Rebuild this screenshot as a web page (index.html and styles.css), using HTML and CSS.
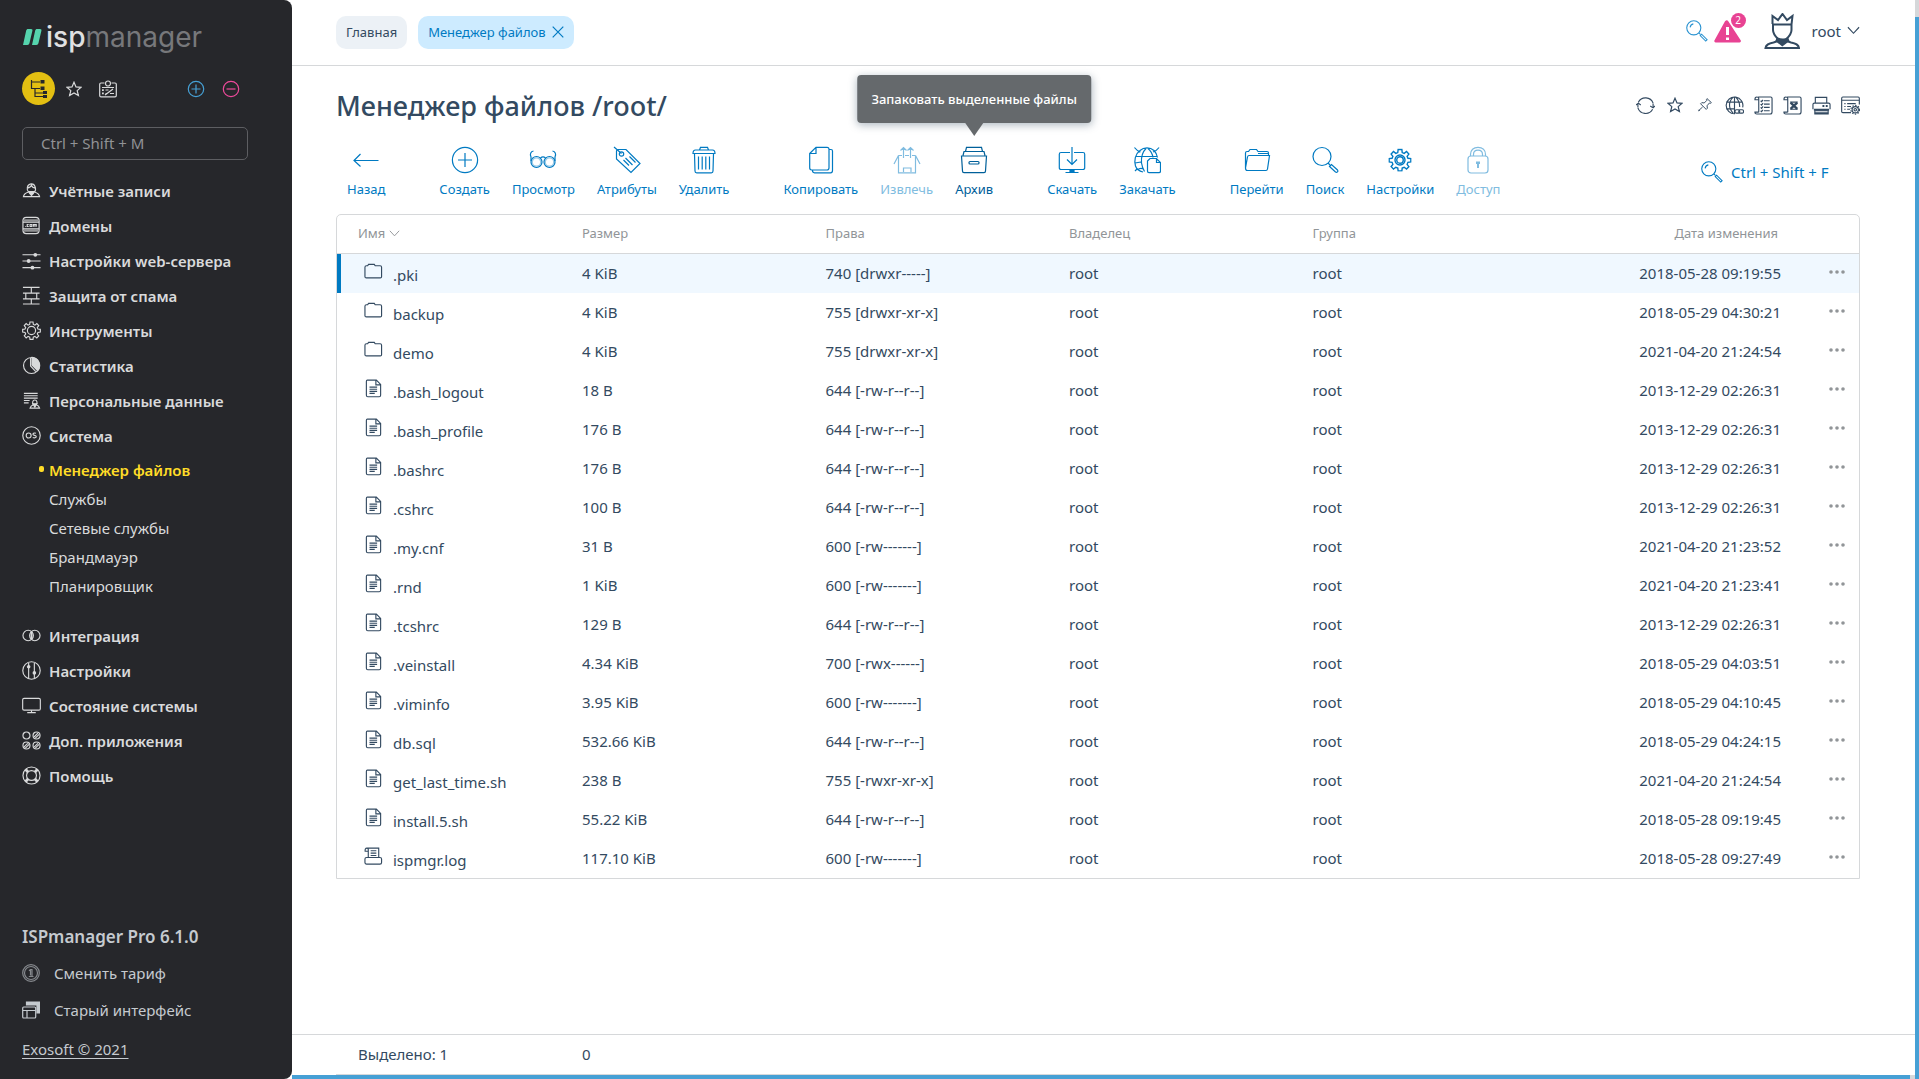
FILE: index.html
```html
<!DOCTYPE html>
<html lang="ru">
<head>
<meta charset="utf-8">
<title>Менеджер файлов</title>
<link rel="stylesheet" href="styles.css">
</head>
<body>
<svg class="sprite" aria-hidden="true">
  <symbol id="i-tree" viewBox="0 0 18 20"><path d="M1.500 1V9.500H10M1.500 3H10M5 10V17.500H13M5 14H13"/><path d="M10.500 1h4v3.500h-4zM10.500 7.500h4v3.500h-4zM13 12h4v3h-4zM13 16h4v3h-4z" fill="currentColor" stroke="none"/></symbol>
  <symbol id="i-star" viewBox="0 0 16 16"><path d="M8 1.200l2 4.700 5 .4-3.800 3.300 1.200 5L8 11.900l-4.400 2.700 1.200-5L1 6.300l5-.4z"/></symbol>
  <symbol id="i-card" viewBox="0 0 18 18"><path d="M5.500 3H2a1.300 1.300 0 0 0-1.300 1.300v11.200A1.300 1.300 0 0 0 2 16.800h14a1.300 1.300 0 0 0 1.300-1.300V4.300A1.300 1.300 0 0 0 16 3h-3.500"/><circle cx="9" cy="3.500" r="2.500"/><path d="M3 7.500h12M6.500 10h3M6.500 13.500h2M11 13.500h4M6 15l8-6"/><path d="M3 9.200h1.800v1.700H3zM3 12.600h1.800v1.700H3z" fill="currentColor" stroke="none"/></symbol>
  <symbol id="i-plus" viewBox="0 0 18 18"><circle cx="9" cy="9" r="7.700"/><path d="M4.500 9h9M9 4.500v9"/></symbol>
  <symbol id="i-minus" viewBox="0 0 18 18"><circle cx="9" cy="9" r="7.700"/><path d="M4.500 9h9"/></symbol>

  <symbol id="i-user" viewBox="0 0 20 20"><path d="M7 11.500C4.500 9.500 5 3.500 9.500 3s6 6 3.500 8.500c2.500.8 5 1.500 5.500 5h-17c.500-3.500 3-4.200 5.500-5zM5.500 7.500C8 7 9.500 6 10 4.500c.5 1.700 2 2.700 4 3"/><path d="M6 10.500h8l-1.500 3L10 16l-2.500-2.500z" fill="currentColor" stroke="none"/></symbol>
  <symbol id="i-domain" viewBox="0 0 20 20"><rect x="1" y="1.500" width="17" height="17" rx="3.500"/><path d="M2 4.500h15M2 15.500h15" opacity=".6" stroke-width="2"/><path d="M1 6.500h17M1 13.500h17"/><path d="M3.500 11h.8M7 9H5.500v2H7M8.500 9h1.800v2H8.500zM12 11.200V9h1.500v2.200M13.500 9H15v2.200"/></symbol>
  <symbol id="i-sliders" viewBox="0 0 20 20"><path d="M.5 4H19.500M.5 10.500h19M.5 17.500h19"/><g fill="currentColor" stroke="none"><circle cx="14" cy="4" r="2"/><circle cx="7" cy="10.500" r="2"/><circle cx="11" cy="17.500" r="2"/></g></symbol>
  <symbol id="i-wall" viewBox="0 0 20 20"><path d="M1 1.500h17.500M1 7.500h17.500M1 13.500h17.500M1 19h17.500M9.800 1.500v6M4 7.500v6M15.500 7.500v6M9.800 13.500V19"/></symbol>
  <symbol id="i-gear" viewBox="0 0 20 20"><path d="M8.400 1h3.200l.3 2.600 1.700.7 2-1.600 2 2.200-1.500 2 .7 1.600 2.500.3v2.800l-2.500.4-.7 1.700 1.500 2-2 2.100-2-1.600-1.700.7-.3 2.400H8.400l-.3-2.400-1.700-.7-2 1.600-2-2.200 1.500-1.900-.7-1.700-2.500-.4V8.800l2.500-.3.7-1.600-1.500-2 2-2.200 2 1.600 1.700-.7z"/><circle cx="10" cy="10" r="4.300"/></symbol>
  <symbol id="i-pie" viewBox="0 0 20 20"><circle cx="10" cy="10" r="8.400"/><path d="M9 2v8.500l5.500 6"/><path d="M10.500 1.500A8.500 8.500 0 0 1 16.500 15.500L10.500 9.500z" fill="currentColor"/></symbol>
  <symbol id="i-personal" viewBox="0 0 20 20"><path d="M2 2.500h14.500M2 5h14.500M2 7.500h14.500M2 10h6M2 12.500h5M8.500 18c.5-2.500 2-3 3.500-3.500-1.500-1.500-1-5 1.500-5s3 3.500 1.500 5c1.500.5 3 1 3.500 3.500z"/><path d="M11.500 13.500h4L13.500 17z" fill="currentColor"/></symbol>
  <symbol id="i-os" viewBox="0 0 20 20"><circle cx="10" cy="10" r="9.200"/><circle cx="7" cy="10" r="2.600"/><path d="M14.700 7.700c-1.500-.7-3.200-.3-3.200 1s3.500 1 3.500 2.400-2 1.700-3.700.9"/></symbol>
  <symbol id="i-rings" viewBox="0 0 20 20"><circle cx="6.500" cy="10" r="5.500"/><circle cx="13.500" cy="10" r="5.500"/><path d="M10 6v8" stroke-width="2"/></symbol>
  <symbol id="i-tune" viewBox="0 0 20 20"><circle cx="10" cy="10" r="9.200"/><path d="M7 2v16M13 2v16"/><g fill="currentColor" stroke="none"><circle cx="7" cy="6" r="1.900"/><circle cx="13" cy="12.500" r="1.900"/></g></symbol>
  <symbol id="i-screen" viewBox="0 0 20 20"><rect x=".7" y="2.500" width="18.600" height="12.300" rx="1.500"/><path d="M10 15v2.500M5.500 17.500h9" /></symbol>
  <symbol id="i-apps" viewBox="0 0 20 20"><circle cx="4.700" cy="4.700" r="3.700"/><circle cx="15.300" cy="4.700" r="3.700"/><circle cx="4.700" cy="15.300" r="3.700"/><circle cx="15.300" cy="15.300" r="3.700"/><path d="M12.700 6.300l4-4M14 7.500l4-4M2 17l4-4M3.500 18l4-4M12.700 17l4-4M14 18l4-4"/></symbol>
  <symbol id="i-help" viewBox="0 0 20 20"><circle cx="10" cy="10" r="9"/><circle cx="10" cy="10" r="5.200"/><path d="M3.800 3.800l2.500 2.500M16.200 3.800l-2.500 2.500M3.800 16.200l2.500-2.500M16.200 16.200l-2.500-2.500" stroke-width="3"/></symbol>
  <symbol id="i-coin" viewBox="0 0 18 18"><circle cx="9" cy="9" r="8.300"/><circle cx="9" cy="9" r="6.500"/><path d="M7 6.800l1.500-1.300H10v7M6.800 12.500h4.700M8.500 5.500v6"/></symbol>
  <symbol id="i-windows" viewBox="0 0 18 18"><path d="M4.500 1h13v11h-2.500V4H4.500z" fill="currentColor"/><rect x=".7" y="6" width="13" height="11" rx="1"/><path d="M1 9.500h12.500M5 9.500V17"/></symbol>

  <symbol id="i-search" viewBox="0 0 24 24"><circle cx="8.500" cy="8.500" r="7.700"/><path d="M14 14l1.700 1.700M15.500 17l1.500-1.500 6 6-1.500 1.500zM4.500 8A4.500 4.500 0 0 1 8 4.200"/></symbol>
  <symbol id="i-alert" viewBox="0 0 28 24"><path d="M12 1.500a2 2 0 0 1 2.300.8L26.500 21a1.500 1.500 0 0 1-1.300 2.500H2A1.500 1.500 0 0 1 .7 21L11 2.300z" fill="currentColor" stroke="none"/><path d="M13.500 8v8M13.500 18.500v2.500" stroke="#fff" stroke-width="3"/></symbol>
  <symbol id="i-avatar" viewBox="0 0 36 36"><path d="M8.500 11V3l5.500 4 4.500-6 4.500 6 5.500-4-1 8.500V17c0 4-3 7-5 9v2l4.500 1.500c5 1 7.500 2 8 5.500H1.500c.5-3.500 3-4.500 8-5.500L14 28v-2c-2-2-5-5-5-9v-6M9 11.500h18.500" stroke-width="2"/><path d="M13 24c3.500 2 7.500 2 11 0l1.500 4-7.200 5.500-7-5.500z" fill="currentColor" stroke="none"/></symbol>
  <symbol id="i-chevron" viewBox="0 0 14 9"><path d="M1 1l6 6.500L13 1"/></symbol>
  <symbol id="i-close" viewBox="0 0 12 12"><path d="M.7.700l10.600 10.600M11.300.700L.7 11.300"/></symbol>

  <symbol id="i-refresh" viewBox="0 0 20 20"><path d="M2 12.500a8.500 8.500 0 0 0 15.500 1.500M18 7.500A8.500 8.500 0 0 0 2.500 6.500M0 9.500l2.500-2 2.500 2M2 12V8M15 10.500l3 2 2-2M18 8v4"/></symbol>
  <symbol id="i-pin" viewBox="0 0 20 20"><path d="M12.500 2l5.500 5-1.500 1-1-.5-3 3.500.5 3-1.500 1.500-7-7L6 7l3 .5L12.500 4l-.7-1zM7 12.500L1.500 17.500M2 16l1.500 1.500"/></symbol>
  <symbol id="i-globe" viewBox="0 0 20 20"><path d="M10.500 18.700A8.800 8.800 0 1 1 18.600 12M10 1v17.500M1.200 6.500h17.500M1.200 13.500h9M8.500 1.500C3.500 6 3.500 13 8.500 18M11.500 1.500c3 3 4 6 4 10"/><rect x="10.500" y="14.500" width="5" height="3.500" rx="1.500"/><rect x="14.500" y="14.500" width="5" height="3.500" rx="1.500"/></symbol>
  <symbol id="i-list" viewBox="0 0 20 20"><path d="M4.500 1H17.500c1 0 1.500.5 1.500 1.500v14c0 2-1 2.500-2 2.500H3c-1.500 0-2-1-2-2h4M5 17V3c0-1.300-.5-2-2-2S1 2 1 4h4M10.500 5h6M10.500 8.500h6M10.500 12h6M10.500 15.500h6M7 5l1 1 1.500-2M7 8.500l1 1 1.500-2M7 12l1 1 1.500-2M7 15.500l1 1 1.500-2"/></symbol>
  <symbol id="i-excel" viewBox="0 0 20 20"><path d="M4.500 1H17.500c1 0 1.500.5 1.500 1.500v14c0 2-1 2.500-2 2.500H3c-1.500 0-2-1-2-2h4M5 17V3c0-1.300-.5-2-2-2S1 2 1 4h4"/><path d="M8 7l7 6.500M15 7l-7 6.500" stroke-width="2.500"/><path d="M7.500 6.500h8M7.500 14h8"/></symbol>
  <symbol id="i-print" viewBox="0 0 20 20"><path d="M3.500 7.500V1.500h12v6M1 14V9c0-1 .5-1.500 1.500-1.500h15c1 0 1.500.5 1.500 1.500v5M3 19V15.500h14V19z"/><path d="M2 13.500h16v2H2zM11 9.500h2v2h-2zM14.500 9.500h2v2h-2zM3 17h14v2H3z" fill="currentColor" stroke="none"/></symbol>
  <symbol id="i-config" viewBox="0 0 20 20"><path d="M10.500 17.500H2c-.8 0-1.300-.5-1.300-1.300V2.500C.7 1.500 1.200 1 2 1h16c.8 0 1.300.5 1.300 1.500V9M1 4.500h18M6.500 8h9M6.500 11h4M6.500 14h3M3.500 8h1.300M3.500 11h1.300M3.500 14h1.300"/><circle cx="15" cy="14.500" r="3.300"/><circle cx="15" cy="14.500" r="4.600" stroke-dasharray="1.500 1.500"/><circle cx="15" cy="14.500" r="1.300"/></symbol>

  <symbol id="t-back" viewBox="0 0 28 28"><path d="M26.500 14.500H2M8.500 8L2 14.500 8.500 20.500"/></symbol>
  <symbol id="t-create" viewBox="0 0 28 28"><circle cx="14" cy="14" r="12.600"/><path d="M7 14h14M14 7v14"/></symbol>
  <symbol id="t-view" viewBox="0 0 28 28"><circle cx="7.500" cy="16" r="5.500"/><circle cx="20.500" cy="16" r="5.500"/><circle cx="7.500" cy="16" r="4.200" opacity=".4"/><circle cx="20.500" cy="16" r="4.200" opacity=".4"/><path d="M11.500 12c1.500-1.300 3.500-1.300 5 0M2 15V11C.5 8 2 5.500 4.500 5M26 15V11c1.500-3 0-5.500-2.500-6"/></symbol>
  <symbol id="t-attr" viewBox="0 0 28 28"><path d="M3.500 5c0-1 .8-1.500 1.500-1.500h8L27 17.500 18 26.500 3.500 13zM1 1l7.500 6.500M12.500 12l7 7M16.500 10.500l6 6M10.500 14l5.500 5.500"/><circle cx="8.500" cy="8" r="2.200"/></symbol>
  <symbol id="t-trash" viewBox="0 0 28 28"><path d="M4.500 8l.5 17c0 1 .7 1.800 1.700 1.800h14.600c1 0 1.700-.7 1.700-1.800l.5-17M3 7.500C3 5 3.500 4 5.500 4h17c2 0 2.500 1 2.500 3.500zM9.500 4l1-2.700h7l1 2.700M8.500 10.500v13M12.200 10.500v13M15.800 10.500v13M19.500 10.500v13"/></symbol>
  <symbol id="t-copy" viewBox="0 0 28 28"><path d="M2.700 7.500L9 1.300h11c1.500 0 2 .5 2 2v18.500c0 1.500-.7 2.200-2 2.200H4.700c-1.500 0-2-.7-2-2.200zM3 7.500h6V1.500M22 3.500h2c1 0 1.500.5 1.500 1.500v19.500c0 1.500-.5 2.300-2 2.300H7.500C6 26.800 5.500 26 5.500 24.500"/></symbol>
  <symbol id="t-extract" viewBox="0 0 28 28"><path d="M5.500 10v16.800h17V10M5.500 9.500L1 18M22.500 9.500L27 18M5.500 9.500H9M12 9.500h4M19 9.500h3.500M10.500 26v-4h7.500v4M10.500 12V1.500M17.500 12V1.500M7.500 4.500l3-3 3 3M14.500 4.500l3-3 3 3"/></symbol>
  <symbol id="t-archive" viewBox="0 0 28 28"><path d="M1.500 10h25l-1 15c0 1-.5 1.700-1.500 1.700H4c-1 0-1.500-.7-1.500-1.700zM3 9.500l1-4h20l1 4M5.500 5.500l1-4.200h15l1 4.200"/><rect x="9" y="15.500" width="10" height="2.500" rx="1"/></symbol>
  <symbol id="t-download" viewBox="0 0 28 28"><path d="M12 6.500H3A1.700 1.700 0 0 0 1.300 8.200v13.500A1.700 1.700 0 0 0 3 23.500h22a1.700 1.700 0 0 0 1.700-1.800V8.200A1.700 1.700 0 0 0 25 6.500h-9M14 1v17M9 13.500l5 5 5-5M7.500 26.500h13"/><path d="M12 24h4v2.500h-4z" fill="currentColor"/></symbol>
  <symbol id="t-upload" viewBox="0 0 28 28"><path d="M1.500 1.500C3 3.500 4 5 7.500 6M26 1.500C24.500 3.500 23.500 5 20 6M7 4.500c4-3.500 10-3.500 14 0C23 6.500 24 9 24.500 11.500M7 4.500C2 8 1 15 2.500 20c1 3 3 5 7.500 6M2.500 10.500h22M13 2.500C9.500 6 8 11 8.500 17c.5 3 1.500 6 3 8.500M15 2.500c3 2.500 4.500 6 5 9M2 17l6-1M4.500 24c2-2 4-2 6-1M2 25l2-2"/><path d="M14.500 15l2.500-2.500h6.500l4 4v8.500c0 1-.5 1.700-1.500 1.700h-10c-1 0-1.500-.7-1.500-1.700zM23.500 12.500v4h4"/></symbol>
  <symbol id="t-go" viewBox="0 0 28 28"><path d="M2.500 22V7c0-1 .5-1.500 1.500-1.500h1.500l1.500-2h6.500l1.500 2h9c1 0 1.500.5 1.500 1.500v2.500M4.500 24.500c-1.500 0-2-1-2-2.500L4.500 11c.2-1 .8-1.500 1.500-1.500h20.500L24.500 23c-.2 1-.7 1.500-1.500 1.500zM15 7.500h10"/></symbol>
  <symbol id="t-search" viewBox="0 0 28 28"><circle cx="11" cy="10.500" r="9"/><path d="M17 17l2 2M18.500 20.500l2-2 6 5.500c1 1.500-.5 3-2 2z"/></symbol>
  <symbol id="t-lock" viewBox="0 0 28 28"><rect x="4" y="10" width="20" height="17" rx="3"/><path d="M6.500 10V8.500C6.500 4 9.500 1.300 14 1.300S21.500 4 21.500 8.500V10M9.500 10V8.500c0-2.700 1.800-4.300 4.500-4.300s4.500 1.600 4.500 4.300V10"/><path d="M12 15.500h4v2.500h-1v4h-2v-4h-1z" fill="currentColor" stroke="none"/></symbol>
  <symbol id="t-gear" viewBox="-2 -2 24 24"><use href="#i-gear" width="20" height="20"/><circle cx="10" cy="10" r="2.800"/></symbol>

  <symbol id="f-folder" viewBox="0 0 20 20"><path d="M1 5.500C1 4.500 1.500 4 2.500 4h1.300l1-1.500h6l1 1.500H17c1 0 1.500.5 1.500 1.500v10c0 .8-.5 1.200-1.300 1.200H2.500C1.500 16.700 1 16.300 1 15.500z"/></symbol>
  <symbol id="f-file" viewBox="0 0 20 20"><path d="M3.500 1.200H13l4.500 4.500v11.500c0 1-.6 1.500-1.500 1.500H4c-1 0-1.500-.5-1.500-1.500V2.500c0-.8.4-1.300 1-1.300zM12.500 1.500V6.200h4.800M5.800 8.500h8M5.800 10.800h8M5.800 13h8M5.800 15.200h5.500"/></symbol>
  <symbol id="f-log" viewBox="0 0 20 20"><path d="M1 12.500c0-1 .7-1.500 1.700-1.500h14.100c1 0 1.700.5 1.700 1.500v3.800c0 1-.7 1.700-1.700 1.700H2.700c-1 0-1.700-.7-1.700-1.700zM4.500 11V4.500H1.200C1 2.500 1.500 1.200 3 1.200h12.500V11M4.500 4.500C4.700 3 4.500 1.500 3.500 1.200M7 4h6M7 6.500h6M7 9h6"/></symbol>
  <symbol id="f-dots" viewBox="0 0 16 4"><g fill="currentColor" stroke="none"><circle cx="2" cy="2" r="1.800"/><circle cx="8" cy="2" r="1.800"/><circle cx="14" cy="2" r="1.800"/></g></symbol>
</svg>

<div class="app">
  <aside class="sidebar">
    <a class="logo" href="#"><svg class="logo-mark" viewBox="0 0 19 16"><path d="M5 0h3c1.300 0 1.700.7 1.400 1.800L6.500 14c-.3 1.300-1 2-2.200 2H0L3.200 1.600C3.500.5 4 0 5 0zM14 0h3c1.300 0 1.700.7 1.400 1.800L15.500 14c-.3 1.300-1 2-2.200 2H9L12.200 1.600C12.500.5 13 0 14 0z" fill="currentColor"/></svg><b>isp</b><span>manager</span></a>

    <div class="side-tools">
      <button class="round active" type="button" aria-label="Дерево меню"><svg width="18" height="20"><use href="#i-tree"/></svg></button>
      <button type="button" aria-label="Избранное"><svg width="16" height="16"><use href="#i-star"/></svg></button>
      <button type="button" aria-label="Карточка"><svg width="18" height="18"><use href="#i-card"/></svg></button>
      <button class="expand" type="button" aria-label="Развернуть"><svg width="18" height="18"><use href="#i-plus"/></svg></button>
      <button class="collapse" type="button" aria-label="Свернуть"><svg width="18" height="18"><use href="#i-minus"/></svg></button>
    </div>

    <input class="menu-search" type="text" placeholder="Ctrl + Shift + M" aria-label="Поиск по меню">

    <nav class="menu">
      <a href="#"><svg><use href="#i-user"/></svg>Учётные записи</a>
      <a href="#"><svg><use href="#i-domain"/></svg>Домены</a>
      <a href="#"><svg><use href="#i-sliders"/></svg>Настройки web-сервера</a>
      <a href="#"><svg><use href="#i-wall"/></svg>Защита от спама</a>
      <a href="#"><svg><use href="#i-gear"/></svg>Инструменты</a>
      <a href="#"><svg><use href="#i-pie"/></svg>Статистика</a>
      <a href="#"><svg><use href="#i-personal"/></svg>Персональные данные</a>
      <a href="#"><svg><use href="#i-os"/></svg>Система</a>
      <div class="submenu">
        <a class="current" href="#">Менеджер файлов</a>
        <a href="#">Службы</a>
        <a href="#">Сетевые службы</a>
        <a href="#">Брандмауэр</a>
        <a href="#">Планировщик</a>
      </div>
      <a href="#"><svg><use href="#i-rings"/></svg>Интеграция</a>
      <a href="#"><svg><use href="#i-tune"/></svg>Настройки</a>
      <a href="#"><svg><use href="#i-screen"/></svg>Состояние системы</a>
      <a href="#"><svg><use href="#i-apps"/></svg>Доп. приложения</a>
      <a href="#"><svg><use href="#i-help"/></svg>Помощь</a>
    </nav>

    <div class="side-footer">
      <strong>ISPmanager Pro 6.1.0</strong>
      <a class="line" href="#"><svg class="dim" width="18" height="18"><use href="#i-coin"/></svg>Сменить тариф</a>
      <a class="line" href="#"><svg width="18" height="18"><use href="#i-windows"/></svg>Старый интерфейс</a>
      <a class="copyright" href="#">Exosoft © 2021</a>
    </div>
  </aside>

  <div class="main">
    <header class="topbar">
      <a class="tab" href="#">Главная</a>
      <div class="tab open"><a href="#">Менеджер файлов</a><button type="button" aria-label="Закрыть вкладку"><svg width="12" height="12"><use href="#i-close"/></svg></button></div>
      <div class="top-right">
        <button class="blue" type="button" aria-label="Поиск"><svg width="22" height="22"><use href="#i-search"/></svg></button>
        <button class="alert" type="button" aria-label="Уведомления"><svg width="28" height="24"><use href="#i-alert"/></svg><span class="badge">2</span></button>
        <button class="user" type="button"><svg width="36" height="36"><use href="#i-avatar"/></svg>root<svg width="13" height="9"><use href="#i-chevron"/></svg></button>
      </div>
    </header>

    <main class="content">
      <div class="title-row">
        <h1>Менеджер файлов /root/</h1>
        <div class="page-actions">
          <button type="button" aria-label="Обновить"><svg><use href="#i-refresh"/></svg></button>
          <button class="small" type="button" aria-label="В избранное"><svg><use href="#i-star"/></svg></button>
          <button class="small" type="button" aria-label="Закрепить"><svg><use href="#i-pin"/></svg></button>
          <button type="button" aria-label="Ссылка"><svg><use href="#i-globe"/></svg></button>
          <button type="button" aria-label="Список"><svg><use href="#i-list"/></svg></button>
          <button type="button" aria-label="Экспорт"><svg><use href="#i-excel"/></svg></button>
          <button type="button" aria-label="Печать"><svg><use href="#i-print"/></svg></button>
          <button type="button" aria-label="Настройка вида"><svg><use href="#i-config"/></svg></button>
        </div>
      </div>

      <div class="toolbar">
        <div class="group">
          <button type="button"><svg><use href="#t-back"/></svg>Назад</button>
        </div>
        <div class="group">
          <button type="button"><svg><use href="#t-create"/></svg>Создать</button>
          <button type="button"><svg><use href="#t-view"/></svg>Просмотр</button>
          <button type="button"><svg><use href="#t-attr"/></svg>Атрибуты</button>
          <button type="button"><svg><use href="#t-trash"/></svg>Удалить</button>
        </div>
        <div class="group">
          <button type="button"><svg><use href="#t-copy"/></svg>Копировать</button>
          <button type="button" disabled><svg><use href="#t-extract"/></svg>Извлечь</button>
          <button class="hover" type="button" aria-describedby="tip"><svg><use href="#t-archive"/></svg>Архив<span class="tooltip" id="tip" role="tooltip">Запаковать выделенные файлы</span></button>
        </div>
        <div class="group">
          <button type="button"><svg><use href="#t-download"/></svg>Скачать</button>
          <button type="button"><svg><use href="#t-upload"/></svg>Закачать</button>
        </div>
        <div class="group">
          <button type="button"><svg><use href="#t-go"/></svg>Перейти</button>
          <button type="button"><svg><use href="#t-search"/></svg>Поиск</button>
          <button type="button"><svg><use href="#t-gear"/></svg>Настройки</button>
          <button type="button" disabled><svg><use href="#t-lock"/></svg>Доступ</button>
        </div>
        <label class="quick"><svg width="22" height="22"><use href="#i-search"/></svg><input type="text" placeholder="Ctrl + Shift + F" aria-label="Быстрый поиск"></label>
      </div>

      <div class="table-box">
        <table>
          <colgroup><col class="c-name"><col class="c-mid"><col class="c-mid"><col class="c-mid"><col class="c-mid"><col><col class="c-more"></colgroup>
          <thead>
            <tr><th><span class="sort">Имя<svg width="11" height="7"><use href="#i-chevron"/></svg></span></th><th>Размер</th><th>Права</th><th>Владелец</th><th>Группа</th><th class="date">Дата изменения</th><th></th></tr>
          </thead>
          <tbody>
            <tr class="selected"><td><span class="file"><svg><use href="#f-folder"/></svg><span>.pki</span></span></td><td>4 KiB</td><td>740 [drwxr-----]</td><td>root</td><td>root</td><td class="date">2018-05-28 09:19:55</td><td><button type="button" aria-label="Ещё"><svg width="16" height="4"><use href="#f-dots"/></svg></button></td></tr>
            <tr><td><span class="file"><svg><use href="#f-folder"/></svg><span>backup</span></span></td><td>4 KiB</td><td>755 [drwxr-xr-x]</td><td>root</td><td>root</td><td class="date">2018-05-29 04:30:21</td><td><button type="button" aria-label="Ещё"><svg width="16" height="4"><use href="#f-dots"/></svg></button></td></tr>
            <tr><td><span class="file"><svg><use href="#f-folder"/></svg><span>demo</span></span></td><td>4 KiB</td><td>755 [drwxr-xr-x]</td><td>root</td><td>root</td><td class="date">2021-04-20 21:24:54</td><td><button type="button" aria-label="Ещё"><svg width="16" height="4"><use href="#f-dots"/></svg></button></td></tr>
            <tr><td><span class="file"><svg><use href="#f-file"/></svg><span>.bash_logout</span></span></td><td>18 B</td><td>644 [-rw-r--r--]</td><td>root</td><td>root</td><td class="date">2013-12-29 02:26:31</td><td><button type="button" aria-label="Ещё"><svg width="16" height="4"><use href="#f-dots"/></svg></button></td></tr>
            <tr><td><span class="file"><svg><use href="#f-file"/></svg><span>.bash_profile</span></span></td><td>176 B</td><td>644 [-rw-r--r--]</td><td>root</td><td>root</td><td class="date">2013-12-29 02:26:31</td><td><button type="button" aria-label="Ещё"><svg width="16" height="4"><use href="#f-dots"/></svg></button></td></tr>
            <tr><td><span class="file"><svg><use href="#f-file"/></svg><span>.bashrc</span></span></td><td>176 B</td><td>644 [-rw-r--r--]</td><td>root</td><td>root</td><td class="date">2013-12-29 02:26:31</td><td><button type="button" aria-label="Ещё"><svg width="16" height="4"><use href="#f-dots"/></svg></button></td></tr>
            <tr><td><span class="file"><svg><use href="#f-file"/></svg><span>.cshrc</span></span></td><td>100 B</td><td>644 [-rw-r--r--]</td><td>root</td><td>root</td><td class="date">2013-12-29 02:26:31</td><td><button type="button" aria-label="Ещё"><svg width="16" height="4"><use href="#f-dots"/></svg></button></td></tr>
            <tr><td><span class="file"><svg><use href="#f-file"/></svg><span>.my.cnf</span></span></td><td>31 B</td><td>600 [-rw-------]</td><td>root</td><td>root</td><td class="date">2021-04-20 21:23:52</td><td><button type="button" aria-label="Ещё"><svg width="16" height="4"><use href="#f-dots"/></svg></button></td></tr>
            <tr><td><span class="file"><svg><use href="#f-file"/></svg><span>.rnd</span></span></td><td>1 KiB</td><td>600 [-rw-------]</td><td>root</td><td>root</td><td class="date">2021-04-20 21:23:41</td><td><button type="button" aria-label="Ещё"><svg width="16" height="4"><use href="#f-dots"/></svg></button></td></tr>
            <tr><td><span class="file"><svg><use href="#f-file"/></svg><span>.tcshrc</span></span></td><td>129 B</td><td>644 [-rw-r--r--]</td><td>root</td><td>root</td><td class="date">2013-12-29 02:26:31</td><td><button type="button" aria-label="Ещё"><svg width="16" height="4"><use href="#f-dots"/></svg></button></td></tr>
            <tr><td><span class="file"><svg><use href="#f-file"/></svg><span>.veinstall</span></span></td><td>4.34 KiB</td><td>700 [-rwx------]</td><td>root</td><td>root</td><td class="date">2018-05-29 04:03:51</td><td><button type="button" aria-label="Ещё"><svg width="16" height="4"><use href="#f-dots"/></svg></button></td></tr>
            <tr><td><span class="file"><svg><use href="#f-file"/></svg><span>.viminfo</span></span></td><td>3.95 KiB</td><td>600 [-rw-------]</td><td>root</td><td>root</td><td class="date">2018-05-29 04:10:45</td><td><button type="button" aria-label="Ещё"><svg width="16" height="4"><use href="#f-dots"/></svg></button></td></tr>
            <tr><td><span class="file"><svg><use href="#f-file"/></svg><span>db.sql</span></span></td><td>532.66 KiB</td><td>644 [-rw-r--r--]</td><td>root</td><td>root</td><td class="date">2018-05-29 04:24:15</td><td><button type="button" aria-label="Ещё"><svg width="16" height="4"><use href="#f-dots"/></svg></button></td></tr>
            <tr><td><span class="file"><svg><use href="#f-file"/></svg><span>get_last_time.sh</span></span></td><td>238 B</td><td>755 [-rwxr-xr-x]</td><td>root</td><td>root</td><td class="date">2021-04-20 21:24:54</td><td><button type="button" aria-label="Ещё"><svg width="16" height="4"><use href="#f-dots"/></svg></button></td></tr>
            <tr><td><span class="file"><svg><use href="#f-file"/></svg><span>install.5.sh</span></span></td><td>55.22 KiB</td><td>644 [-rw-r--r--]</td><td>root</td><td>root</td><td class="date">2018-05-28 09:19:45</td><td><button type="button" aria-label="Ещё"><svg width="16" height="4"><use href="#f-dots"/></svg></button></td></tr>
            <tr><td><span class="file"><svg><use href="#f-log"/></svg><span>ispmgr.log</span></span></td><td>117.10 KiB</td><td>600 [-rw-------]</td><td>root</td><td>root</td><td class="date">2018-05-28 09:27:49</td><td><button type="button" aria-label="Ещё"><svg width="16" height="4"><use href="#f-dots"/></svg></button></td></tr>
          </tbody>
        </table>
      </div>
    </main>

    <footer class="totals"><div class="totals-row"><span class="picked">Выделено: 1</span><span>0</span></div></footer>
    <div class="scroll-x"><i></i></div>
  </div>
  <div class="scroll-y"><i></i></div>
</div>
</body>
</html>
```
FILE: styles.css
```css
* { box-sizing: border-box; }

body {
  margin: 0;
  background: #fff;
  color: #334a61;
  font: 15px/20px "Noto Sans", "Open Sans", sans-serif;
}

svg {
  display: block;
  flex: none;
  fill: none;
  stroke: currentColor;
  stroke-width: 1.2;
}

.sprite { display: none; }

a { color: inherit; text-decoration: none; }

button {
  display: flex;
  align-items: center;
  margin: 0;
  padding: 0;
  border: 0;
  background: none;
  color: inherit;
  font: inherit;
  cursor: pointer;
}

.app { display: flex; min-height: 100vh; }

/* Sidebar */
.sidebar {
  display: flex;
  flex: none;
  flex-direction: column;
  width: 292px;
  padding: 17px 22px 20px;
  border-radius: 0 8px 8px 0;
  background: #26272b;
  color: #d9dadb;
}

.logo {
  display: flex;
  align-items: center;
  height: 40px;
  font: 28px/40px Inter, sans-serif;
  color: #77787b;
}
.logo b { margin-left: 4px; font-weight: 500; color: #e0e1e2; }
.logo-mark { width: 19px; height: 16px; margin-left: 1px; color: #55d4ad; stroke: none; }

.side-tools {
  display: flex;
  align-items: center;
  gap: 17px;
  height: 33px;
  margin-top: 15px;
  padding-right: 30px;
}
.side-tools .round {
  justify-content: center;
  width: 33px;
  height: 33px;
  margin-right: -6px;
  border-radius: 50%;
  background: #e3bf12;
  color: #26272b;
}
.side-tools .expand { margin-left: auto; color: #46a0d5; }
.side-tools .collapse { color: #ee4a9b; }

.menu-search {
  width: 226px;
  height: 33px;
  margin-top: 22px;
  padding: 0 18px 2px;
  border: 1px solid #5d5e62;
  border-radius: 5px;
  background: none;
  color: #d9dadb;
  font: inherit;
}
.menu-search::placeholder { color: #919295; opacity: 1; }

.menu { margin-top: 13px; }
.menu > a {
  display: flex;
  align-items: center;
  gap: 8px;
  height: 35px;
  font-weight: 600;
}
.menu > a svg { width: 19px; height: 19px; }
.submenu { padding: 3px 0 17px 27px; }
.submenu a { display: block; line-height: 29px; }
.submenu .current {
  position: relative;
  color: #ffdc27;
  font-weight: 600;
}
.submenu .current::before {
  content: "";
  position: absolute;
  left: -10px;
  top: 10px;
  width: 5px;
  height: 6px;
  border-radius: 2px;
  background: currentColor;
}

.side-footer { margin-top: auto; color: #c5cacf; }
.side-footer strong { display: block; font-size: 17px; line-height: 34px; font-weight: 600; }
.side-footer .line { display: flex; align-items: center; gap: 14px; height: 37px; }
.side-footer .dim { opacity: .6; }
.side-footer .copyright {
  display: inline-block;
  margin-top: 11px;
  text-decoration: underline;
  text-underline-offset: 3px;
}

/* Main column */
.main { display: flex; flex: 1; flex-direction: column; min-width: 0; }

.topbar {
  display: flex;
  align-items: center;
  gap: 11px;
  height: 66px;
  padding: 0 55px 0 44px;
  border-bottom: 1px solid #d6d8da;
}
.tab {
  display: flex;
  align-items: center;
  gap: 6px;
  height: 33px;
  padding: 0 10px 2px;
  border-radius: 10px;
  background: #ecf1f6;
  font-size: 13px;
}
.tab.open { background: #cdebff; color: #007ac2; }

.top-right { display: flex; align-items: center; margin-left: auto; padding-bottom: 4px; }
.blue { margin-right: 6px; color: #2b93d1; }
.alert { position: relative; margin-right: 22px; color: #e84393; }
.badge {
  position: absolute;
  top: -6px;
  right: -4px;
  width: 15px;
  height: 15px;
  border-radius: 50%;
  background: #e84393;
  color: #fff;
  font-size: 10px;
  line-height: 15px;
}
.user { gap: 12px; }
.user svg:last-child { margin-left: -6px; }

.content { flex: 1; padding: 0 55px 0 44px; }

.title-row {
  display: flex;
  align-items: center;
  justify-content: space-between;
  height: 80px;
}
h1 { margin: 0; font-size: 27px; line-height: 40px; font-weight: 500; }
.page-actions { display: flex; gap: 10px; padding-bottom: 2px; }
.page-actions svg { width: 19px; height: 19px; }
.page-actions .small { padding: 0 2px; }
.page-actions .small svg { width: 16px; height: 16px; }

.toolbar { display: flex; align-items: flex-start; height: 68px; }
.group { display: flex; margin-right: 32px; }
.toolbar button {
  position: relative;
  flex-direction: column;
  gap: 5px;
  padding: 0 11px;
  color: #007ac2;
  font-size: 13px;
}
.toolbar button svg { width: 28px; height: 28px; }
.toolbar button:disabled { color: #80bce0; }
.toolbar .hover { color: #00609a; }
.tooltip {
  position: absolute;
  bottom: 76px;
  left: 50%;
  z-index: 2;
  padding: 14px;
  border-radius: 4px;
  background: #65696c;
  box-shadow: 0 2px 8px rgba(50, 74, 97, .4);
  color: #fff;
  font-weight: 500;
  white-space: nowrap;
  transform: translateX(-50%);
}
.tooltip::after {
  content: "";
  position: absolute;
  top: 100%;
  left: 50%;
  margin-left: -9px;
  border: 9px solid transparent;
  border-top: 13px solid #65696c;
  border-bottom: 0;
}
.quick {
  display: flex;
  align-items: center;
  gap: 8px;
  height: 52px;
  margin-left: auto;
  margin-right: 11px;
  color: #007ac2;
}
.quick input {
  width: 118px;
  padding: 0;
  border: 0;
  background: none;
  color: inherit;
  font: inherit;
}
.quick input::placeholder { color: inherit; opacity: 1; }

/* File table */
.table-box { border: 1px solid #d6d8da; border-radius: 5px 5px 0 0; }
table { width: 100%; border-spacing: 0; table-layout: fixed; }
.c-name { width: 224px; }
.c-mid { width: 16%; }
.c-more { width: 57px; }
th, td { height: 39px; padding: 0 0 2px 21px; text-align: left; white-space: nowrap; }
td:first-child, td:last-child { padding-bottom: 0; }
th {
  border-bottom: 1px solid #d6d8da;
  color: #919598;
  font-size: 13px;
  font-weight: 400;
}
.date { padding-right: 21px; text-align: right; }
th.date { padding-right: 24px; }
.sort { display: flex; align-items: center; gap: 4px; }
.selected { background: #f0f8ff; }
.selected td:first-child { box-shadow: inset 4px 0 #007ac2; }
.file { display: flex; align-items: center; gap: 10px; padding-left: 6px; }
.file svg { width: 19px; height: 19px; margin-bottom: 4px; }
.file span { padding-top: 3px; }
td:last-child { padding-left: 27px; color: #919598; }
td button { padding-bottom: 4px; }

/* Totals and scroll bars */
.totals { padding: 0 55px 0 44px; border-top: 1px solid #d6d8da; }
.totals-row { display: flex; align-items: center; height: 40px; padding: 0 0 2px 22px; border-bottom: 1px solid #d6d8da; }
.picked { width: 224px; }
.scroll-x { height: 4px; padding-right: 5px; background: #d6d8da; }
.scroll-x i { display: block; height: 100%; background: #46a0d5; }
.scroll-y { display: flex; width: 4px; padding-top: 17px; background: #d6d8da; }
.scroll-y i { width: 100%; background: #46a0d5; }
```
